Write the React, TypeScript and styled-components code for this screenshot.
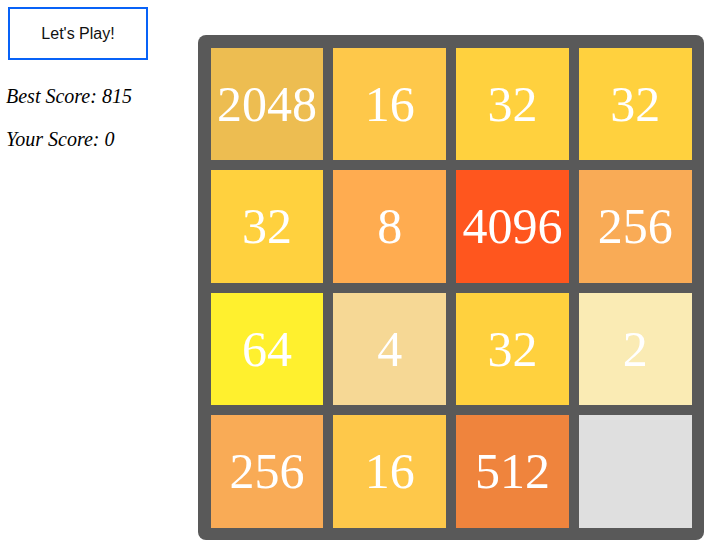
import React from "react";
import styled, { createGlobalStyle } from "styled-components";

const Global = createGlobalStyle`
  html, body { margin: 0; padding: 0; background: #ffffff; }
  body { font-family: "Liberation Serif", "Times New Roman", serif; }
`;

const Page = styled.div`
  display: flex;
  align-items: flex-start;
  padding: 7px 0 0 8px;
`;

const Side = styled.div`
  display: flex;
  flex-direction: column;
  width: 140px;
`;

const PlayButton = styled.button`
  box-sizing: border-box;
  width: 140px;
  height: 53px;
  background: #ffffff;
  border: 2px solid #0862f7;
  font-family: "Liberation Sans", Arial, sans-serif;
  font-size: 16px;
  color: #111111;
  padding: 0;
  cursor: pointer;
`;

const ScoreLine = styled.p`
  margin: 0;
  margin-left: -2px;
  font-family: "Liberation Serif", "Times New Roman", serif;
  font-style: italic;
  font-size: 20px;
  line-height: 43px;
  color: #000000;
  white-space: nowrap;
`;

const Scores = styled.div`
  margin-top: 15px;
`;

const Board = styled.div`
  box-sizing: border-box;
  margin: 28px 0 0 50px;
  width: 506px;
  height: 505px;
  padding: 12.5px;
  background: #595959;
  border-radius: 8px;
  display: grid;
  grid-template-columns: repeat(4, 1fr);
  grid-template-rows: repeat(4, 1fr);
  gap: 10px;
`;

const Tile = styled.div<{ $bg: string }>`
  background: ${(p) => p.$bg};
  display: flex;
  align-items: center;
  justify-content: center;
  color: #ffffff;
  font-family: "Liberation Serif", "Times New Roman", serif;
  font-size: 50px;
  line-height: 1;
`;

const colors: Record<number, string> = {
  0: "#dfdfdf",
  2: "#faebb4",
  4: "#f6d895",
  8: "#ffac50",
  16: "#fec84a",
  32: "#ffd13e",
  64: "#fff02e",
  256: "#f9ab56",
  512: "#ef843d",
  2048: "#edbd51",
  4096: "#ff561e",
};

const grid = [
  [2048, 16, 32, 32],
  [32, 8, 4096, 256],
  [64, 4, 32, 2],
  [256, 16, 512, 0],
];

export default function App() {
  return (
    <>
      <Global />
      <Page>
        <Side>
          <PlayButton>Let's Play!</PlayButton>
          <Scores>
            <ScoreLine>Best Score: 815</ScoreLine>
            <ScoreLine>Your Score: 0</ScoreLine>
          </Scores>
        </Side>
        <Board>
          {grid.flat().map((v, i) => (
            <Tile key={i} $bg={colors[v]}>
              {v ? v : ""}
            </Tile>
          ))}
        </Board>
      </Page>
    </>
  );
}
